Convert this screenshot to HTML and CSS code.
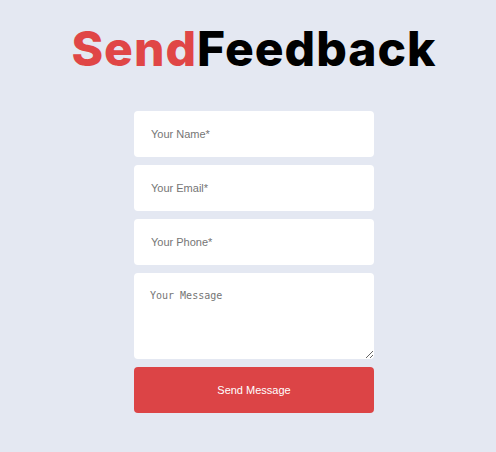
FILE: index.html
```html
<!DOCTYPE html>
<html lang="en">
<head>
<meta charset="utf-8">
<title>Send Feedback</title>
<link rel="stylesheet" href="styles.css">
</head>
<body>
<main class="page">
  <h1 class="title"><span class="accent">Send</span>Feedback</h1>
  <form class="form">
    <input class="field" type="text" placeholder="Your Name*">
    <input class="field" type="email" placeholder="Your Email*">
    <input class="field" type="tel" placeholder="Your Phone*">
    <textarea class="field area" placeholder="Your Message"></textarea>
    <button class="submit" type="button">Send Message</button>
  </form>
</main>
</body>
</html>
```

FILE: styles.css
```css
html, body {
  margin: 0;
  padding: 0;
  background: #e4e8f2;
}
.page {
  display: flex;
  flex-direction: column;
  align-items: center;
  padding-top: 21px;
  padding-left: 12px;
}
.title {
  margin: 0;
  font-family: Inter, "Noto Sans", sans-serif;
  font-weight: 800;
  font-size: 48px;
  line-height: 56px;
  color: #000;
  letter-spacing: 1px;
}
.accent {
  color: #e04646;
}
.form {
  margin-top: 34px;
  width: 240px;
  display: flex;
  flex-direction: column;
  gap: 8px;
}
.field {
  box-sizing: border-box;
  width: 240px;
  height: 46px;
  border: none;
  border-radius: 4px;
  background: #fff;
  padding: 0 17px;
  font-family: "Liberation Sans", Arial, sans-serif;
  font-size: 11px;
  color: #333;
  outline: none;
  margin: 0;
}
.field::placeholder {
  color: #757575;
}
.area {
  height: 86px;
  padding: 17px 16px;
  font-family: "DejaVu Sans Mono", monospace;
  font-size: 10px;
  resize: vertical;
  display: block;
}
.submit {
  height: 46px;
  border: none;
  border-radius: 4px;
  background: #dc4446;
  color: #fff;
  font-family: "Liberation Sans", Arial, sans-serif;
  font-size: 11px;
  cursor: pointer;
}
```
